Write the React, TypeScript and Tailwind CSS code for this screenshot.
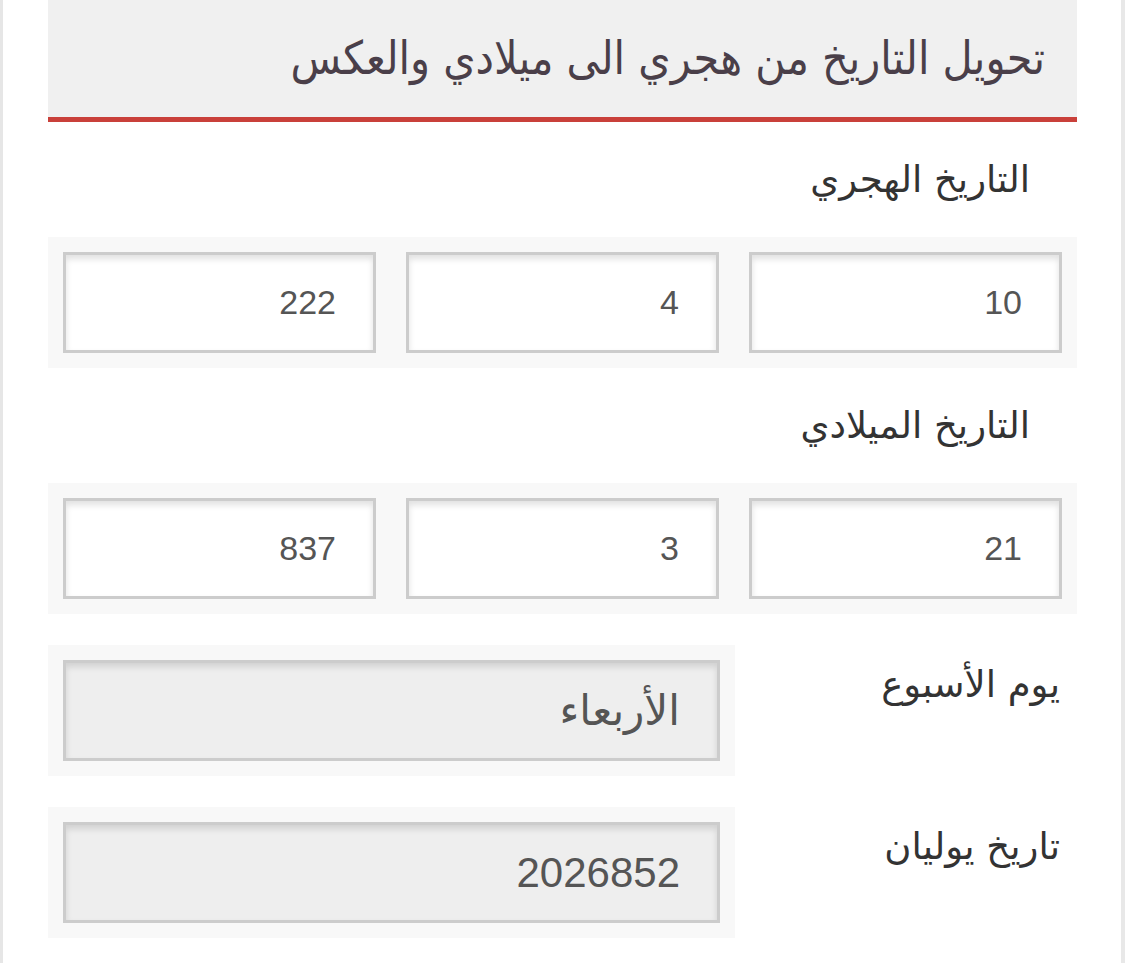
import React from 'react'

const arabic = { fontFamily: '"DejaVu Sans", sans-serif' }
const field = { fontFamily: '"Liberation Sans", "DejaVu Sans", sans-serif' }

function Field({ value, readOnly }: { value: string; readOnly?: boolean }) {
  return (
    <div
      className={`h-[101px] border-[3px] border-[#cccccc] shadow-[inset_0_4px_6px_rgba(0,0,0,0.12)] flex items-center pr-[37px] text-[#555555] ${
        readOnly ? 'bg-[#eeeeee] text-[42px]' : 'bg-white text-[34px]'
      }`}
      style={field}
    >
      {value}
    </div>
  )
}

function TripleRow({ values }: { values: string[] }) {
  return (
    <div className="bg-[#f8f8f8] p-[15px] grid grid-cols-3 gap-[30px]">
      {values.map((v, i) => (
        <Field key={i} value={v} />
      ))}
    </div>
  )
}

function SideRow({ label, value }: { label: string; value: string }) {
  return (
    <div className="flex mt-[31px]">
      <div className="flex-1 pr-[17px] pt-[14px] text-[37px] leading-[1.4] text-[#333333]" style={arabic}>
        {label}
      </div>
      <div className="w-[687px] bg-[#f8f8f8] p-[15px]">
        <Field value={value} readOnly />
      </div>
    </div>
  )
}

export default function App() {
  return (
    <div className="min-h-screen bg-white flex">
      <div className="w-[3px] bg-[#e6e6e6]" />
      <div className="flex-1 pl-[45px] pr-[44px]">
        <div dir="rtl">
          {/* Header */}
          <div className="h-[122px] bg-[#f0f0f0] border-b-[5px] border-[#c9403a] flex items-center pr-[32px]">
            <h1 className="text-[46px] leading-[1.3] text-[#4a3f49] font-normal" style={{ fontFamily: '"DejaVu Sans Condensed", "DejaVu Sans", sans-serif' }}>
              تحويل التاريخ من هجري الى ميلادي والعكس
            </h1>
          </div>

          <div className="h-[115px] pr-[47px] pt-[32px] text-[37px] leading-[1.4] text-[#333333]" style={arabic}>
            التاريخ الهجري
          </div>
          <TripleRow values={['10', '4', '222']} />

          <div className="h-[115px] pr-[47px] pt-[32px] text-[37px] leading-[1.4] text-[#333333]" style={arabic}>
            التاريخ الميلادي
          </div>
          <TripleRow values={['21', '3', '837']} />

          <SideRow label="يوم الأسبوع" value="الأربعاء" />
          <SideRow label="تاريخ يوليان" value="2026852" />
        </div>
      </div>
      <div className="w-[4px] bg-[#e8e8e8]" />
    </div>
  )
}
